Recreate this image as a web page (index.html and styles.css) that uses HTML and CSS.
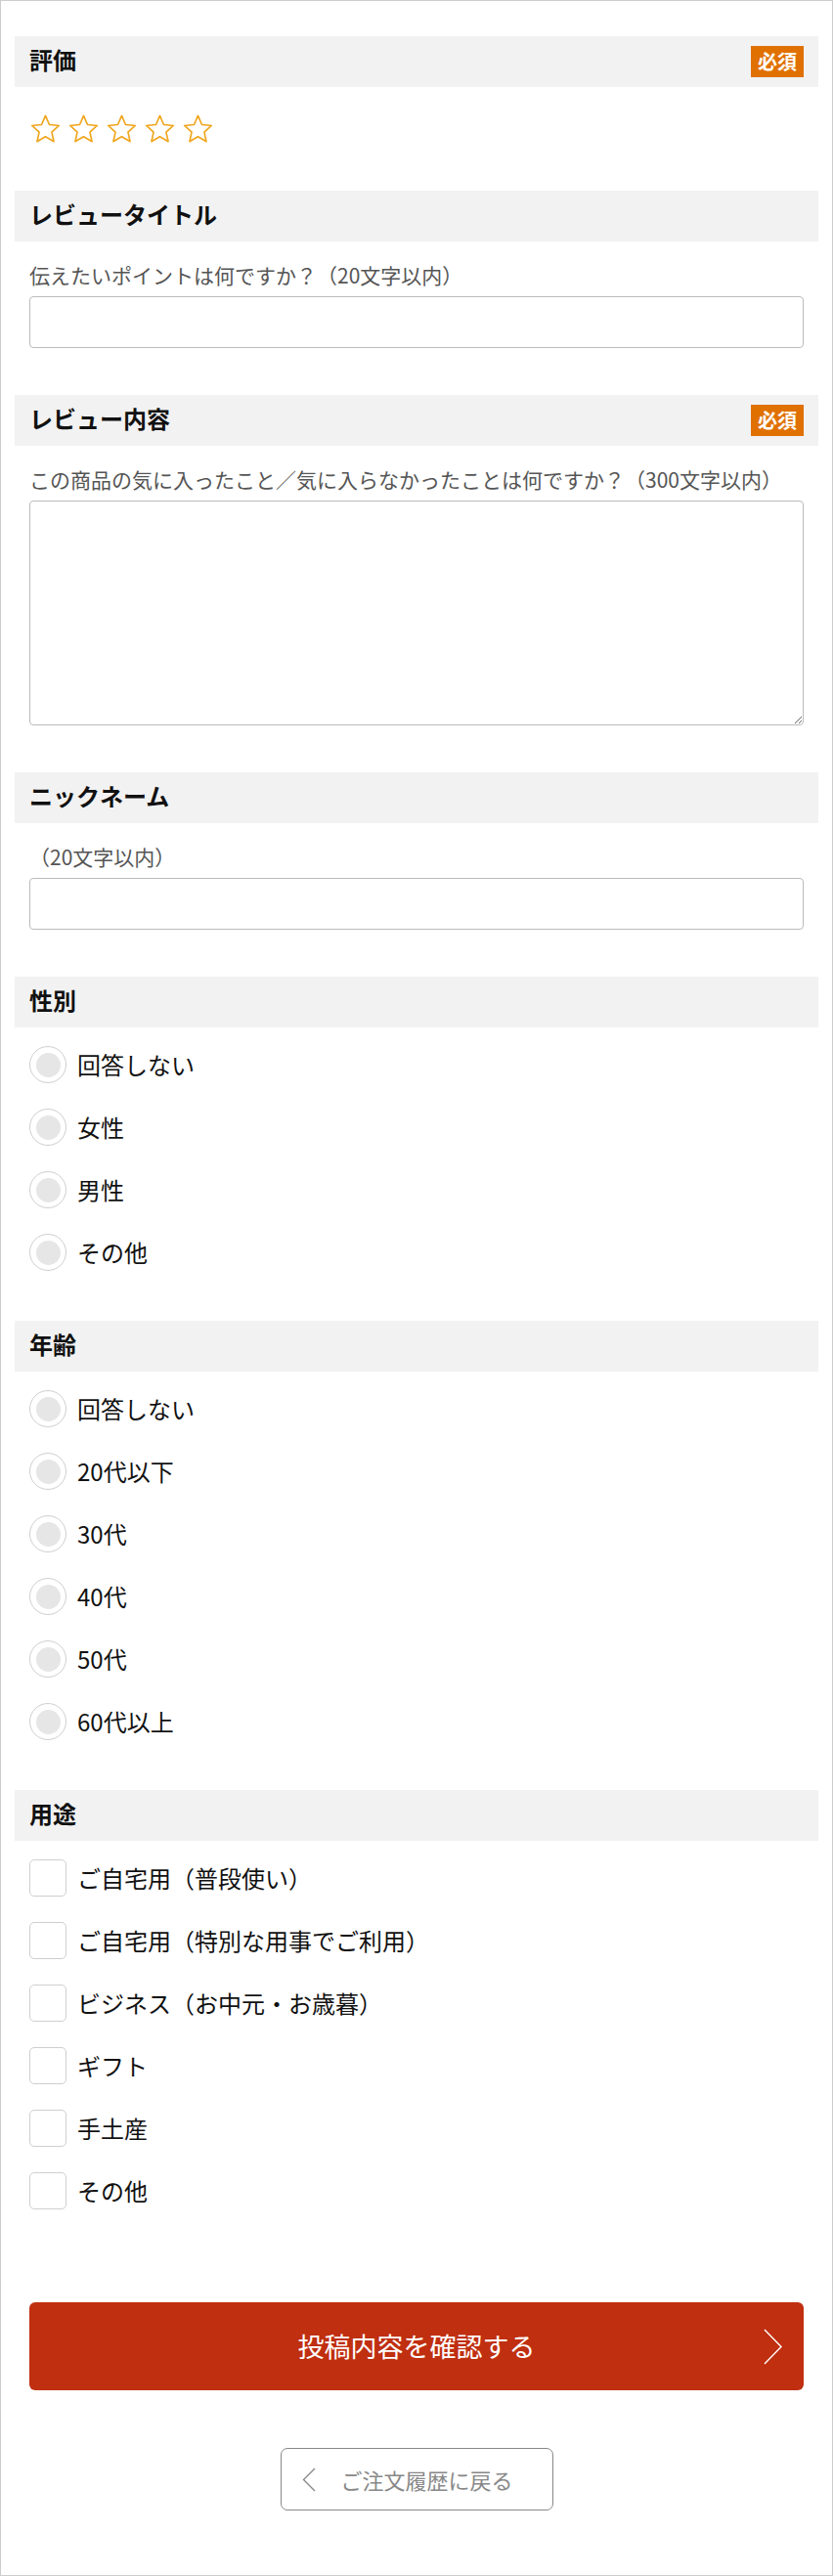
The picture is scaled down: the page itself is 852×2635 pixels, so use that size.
FILE: index.html
```html
<!DOCTYPE html>
<html lang="ja">
<head>
<meta charset="utf-8">
<title>レビュー投稿</title>
<link rel="stylesheet" href="styles.css">
</head>
<body>
<div class="page">
  <section class="sec sec-rating">
    <div class="head"><h2>評価</h2><span class="req">必須</span></div>
    <div class="body">
      <div class="stars">
        <svg class="star" viewBox="0 0 32 31"><path d="M16 1.5L20.11 10.84 30.27 11.86 22.66 18.66 24.82 28.64 16 23.5 7.18 28.64 9.34 18.66 1.73 11.86 11.89 10.84Z"/></svg>
        <svg class="star" viewBox="0 0 32 31"><path d="M16 1.5L20.11 10.84 30.27 11.86 22.66 18.66 24.82 28.64 16 23.5 7.18 28.64 9.34 18.66 1.73 11.86 11.89 10.84Z"/></svg>
        <svg class="star" viewBox="0 0 32 31"><path d="M16 1.5L20.11 10.84 30.27 11.86 22.66 18.66 24.82 28.64 16 23.5 7.18 28.64 9.34 18.66 1.73 11.86 11.89 10.84Z"/></svg>
        <svg class="star" viewBox="0 0 32 31"><path d="M16 1.5L20.11 10.84 30.27 11.86 22.66 18.66 24.82 28.64 16 23.5 7.18 28.64 9.34 18.66 1.73 11.86 11.89 10.84Z"/></svg>
        <svg class="star" viewBox="0 0 32 31"><path d="M16 1.5L20.11 10.84 30.27 11.86 22.66 18.66 24.82 28.64 16 23.5 7.18 28.64 9.34 18.66 1.73 11.86 11.89 10.84Z"/></svg>
      </div>
    </div>
  </section>

  <section class="sec">
    <div class="head"><h2>レビュータイトル</h2></div>
    <div class="body">
      <p class="label">伝えたいポイントは何ですか？（20文字以内）</p>
      <input class="text" type="text">
    </div>
  </section>

  <section class="sec">
    <div class="head"><h2>レビュー内容</h2><span class="req">必須</span></div>
    <div class="body">
      <p class="label">この商品の気に入ったこと／気に入らなかったことは何ですか？（300文字以内）</p>
      <textarea class="area"></textarea>
    </div>
  </section>

  <section class="sec">
    <div class="head"><h2>ニックネーム</h2></div>
    <div class="body">
      <p class="label">（20文字以内）</p>
      <input class="text" type="text">
    </div>
  </section>

  <section class="sec sec-list">
    <div class="head"><h2>性別</h2></div>
    <div class="body list">
      <div class="choice"><span class="radio"></span><span>回答しない</span></div>
      <div class="choice"><span class="radio"></span><span>女性</span></div>
      <div class="choice"><span class="radio"></span><span>男性</span></div>
      <div class="choice"><span class="radio"></span><span>その他</span></div>
    </div>
  </section>

  <section class="sec sec-list">
    <div class="head"><h2>年齢</h2></div>
    <div class="body list">
      <div class="choice"><span class="radio"></span><span>回答しない</span></div>
      <div class="choice"><span class="radio"></span><span>20代以下</span></div>
      <div class="choice"><span class="radio"></span><span>30代</span></div>
      <div class="choice"><span class="radio"></span><span>40代</span></div>
      <div class="choice"><span class="radio"></span><span>50代</span></div>
      <div class="choice"><span class="radio"></span><span>60代以上</span></div>
    </div>
  </section>

  <section class="sec sec-last">
    <div class="head"><h2>用途</h2></div>
    <div class="body list">
      <div class="choice"><span class="check"></span><span>ご自宅用（普段使い）</span></div>
      <div class="choice"><span class="check"></span><span>ご自宅用（特別な用事でご利用）</span></div>
      <div class="choice"><span class="check"></span><span>ビジネス（お中元・お歳暮）</span></div>
      <div class="choice"><span class="check"></span><span>ギフト</span></div>
      <div class="choice"><span class="check"></span><span>手土産</span></div>
      <div class="choice"><span class="check"></span><span>その他</span></div>
    </div>
  </section>

  <div class="actions">
    <button class="submit" type="button">
      <span></span>
      <span class="submit-text">投稿内容を確認する</span>
      <svg class="chev-r" viewBox="0 0 19 37"><path d="M1 1l17 17.5L1 36"/></svg>
    </button>
    <div class="back-wrap">
      <a class="back" href="#">
        <svg class="chev-l" viewBox="0 0 14 25"><path d="M13 1L1.5 12.5 13 24"/></svg>
        <span>ご注文履歴に戻る</span>
      </a>
    </div>
  </div>
</div>
</body>
</html>
```

FILE: styles.css
```css
* {
  box-sizing: border-box;
}

html, body {
  margin: 0;
  padding: 0;
  background: #fff;
}

body {
  font-family: "Noto Sans CJK JP", "Noto Sans", sans-serif;
  color: #111;
}

.page {
  width: 852px;
  height: 2635px;
  border: 1px solid #cccccc;
  padding: 36px 14px 0;
}

.sec {
  margin-bottom: 48px;
}

.sec-list {
  margin-bottom: 38px;
}

.sec-last {
  margin-bottom: 0;
}

.head {
  height: 52px;
  background: #f2f2f2;
  display: flex;
  align-items: center;
  justify-content: space-between;
  padding: 0 15px;
}

.head h2 {
  margin: 0 0 5px;
  font-size: 24px;
  line-height: 30px;
  font-weight: 700;
  color: #111;
}

.req {
  width: 54px;
  height: 32px;
  background: #e07000;
  color: #fff;
  font-size: 20px;
  font-weight: 700;
  line-height: 31px;
  text-align: center;
}

.body {
  padding: 0 15px;
}

.stars {
  display: flex;
  gap: 8px;
  margin-top: 28px;
  height: 30px;
  padding-left: 1px;
}

.star {
  width: 31px;
  height: 30px;
  fill: none;
  stroke: #f0a51c;
  stroke-width: 1.7;
  stroke-linejoin: round;
}

.label {
  margin: 19px 0 7px;
  font-size: 21px;
  line-height: 30px;
  color: #555;
}

.text {
  display: block;
  width: 100%;
  height: 53px;
  margin: 0;
  border: 1px solid #bbbbbb;
  border-radius: 4px;
  background: #fff;
  font-size: 21px;
  font-family: inherit;
  padding: 0 10px;
}

.area {
  display: block;
  width: 100%;
  height: 230px;
  margin: 0;
  border: 1px solid #bbbbbb;
  border-radius: 4px;
  background: #fff;
  font-size: 21px;
  font-family: inherit;
  padding: 10px;
  resize: vertical;
}

.list {
  padding-top: 6px;
}

.choice {
  display: flex;
  align-items: center;
  gap: 11px;
  height: 64px;
  font-size: 24px;
  line-height: 30px;
  color: #111;
}

.radio {
  flex: none;
  width: 38px;
  height: 38px;
  border: 1px solid #cfcfcf;
  border-radius: 50%;
  background: #fff;
  display: flex;
  align-items: center;
  justify-content: center;
}

.radio::after {
  content: "";
  width: 25px;
  height: 25px;
  border-radius: 50%;
  background: #e6e6e6;
}

.check {
  flex: none;
  width: 38px;
  height: 38px;
  border: 1px solid #cfcfcf;
  border-radius: 5px;
  background: #fff;
}

.actions {
  padding: 0 15px;
}

.submit {
  display: grid;
  grid-template-columns: 1fr auto 1fr;
  align-items: center;
  width: 100%;
  height: 90px;
  margin: 82px 0 0;
  padding: 0 22px;
  border: none;
  border-radius: 6px;
  background: #bf2f10;
  color: #fff;
  font-family: inherit;
  font-size: 27px;
  line-height: 36px;
  cursor: pointer;
}

.submit-text {
  font-weight: 400;
}

.chev-r {
  justify-self: end;
  width: 19px;
  height: 37px;
  fill: none;
  stroke: #fff;
  stroke-width: 1.4;
}

.back-wrap {
  display: flex;
  justify-content: center;
  margin-top: 59px;
}

.back {
  display: flex;
  align-items: center;
  width: 279px;
  height: 64px;
  padding-left: 21px;
  gap: 26px;
  border: 1px solid #888;
  border-radius: 7px;
  color: #888;
  font-size: 22px;
  line-height: 30px;
  text-decoration: none;
}

.chev-l {
  flex: none;
  width: 14px;
  height: 25px;
  fill: none;
  stroke: #888;
  stroke-width: 1.4;
}
```
